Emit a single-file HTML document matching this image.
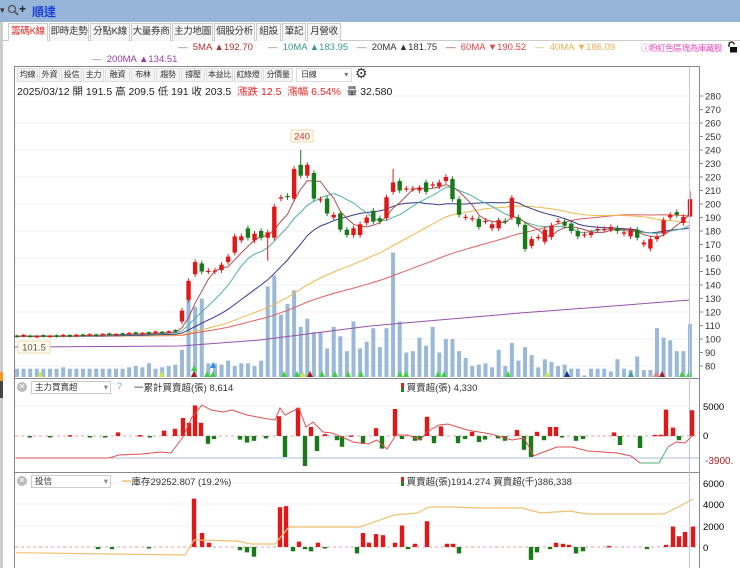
<!DOCTYPE html>
<html><head><meta charset="utf-8">
<style>
*{margin:0;padding:0;box-sizing:border-box}
body{width:740px;height:568px;overflow:hidden;background:#fff;font-family:"Liberation Sans","Noto Sans CJK TC",sans-serif;position:relative;color:#333}
.hdr{position:absolute;left:0;top:0;width:740px;height:22px;background:#97b4d9}
.abs{position:absolute;white-space:nowrap}
.tab{position:absolute;top:23px;height:18px;border:1px solid #ccc;border-bottom:none;background:#f6f6f6;font-size:9.5px;line-height:16px;text-align:center;color:#333;white-space:nowrap;overflow:hidden;letter-spacing:-0.3px}
.tb{position:absolute;top:68px;height:14px;border:1px solid #ddd;background:#f4f4f4;font-size:8px;line-height:12px;text-align:center;color:#333;white-space:nowrap;overflow:hidden;letter-spacing:-0.3px}
</style></head><body>
<div class="hdr"></div>
<div class="abs" style="left:0;top:5px;font-size:9px;color:#333">▾</div>
<svg class="abs" style="left:7px;top:4px" width="12" height="12"><circle cx="5" cy="5" r="3.5" fill="none" stroke="#555" stroke-width="1.3"/><line x1="7.5" y1="7.5" x2="11" y2="11" stroke="#555" stroke-width="1.6"/></svg>
<div class="abs" style="left:19px;top:2px;font-size:12px;font-weight:bold;color:#222">+</div>
<div class="abs" style="left:32px;top:3px;font-size:12px;font-weight:bold;color:#1a3fd8">順達</div>
<div class="abs" style="left:0;top:22px;width:740px;height:1px;background:#fff"></div>
<div class="abs" style="left:0;top:40px;width:740px;height:1px;background:#ccc"></div>
<div class="abs" style="left:0;top:22px;width:3px;height:546px;background:#ccc"></div>
<div class="abs" style="left:0;top:372px;width:3px;height:9px;background:#f39a1e"></div>
<div class="abs" style="left:0;top:381px;width:3px;height:17px;background:#444"></div>
<div class="tab" style="left:8px;width:40px;background:#fff;color:#d22">籌碼K線</div>
<div class="tab" style="left:49px;width:40px">即時走勢</div>
<div class="tab" style="left:90px;width:40px">分點K線</div>
<div class="tab" style="left:131px;width:40px">大量券商</div>
<div class="tab" style="left:172px;width:41px">主力地圖</div>
<div class="tab" style="left:214px;width:41px">個股分析</div>
<div class="tab" style="left:256px;width:25px">組設</div>
<div class="tab" style="left:282px;width:24px">筆記</div>
<div class="tab" style="left:307px;width:34px">月營收</div>
<div class="abs" style="top:42px;font-size:9.5px;left:178px;color:#a33"><span style="color:#777">—</span>&nbsp;&nbsp;5MA ▲192.70</div>
<div class="abs" style="top:42px;font-size:9.5px;left:268px;color:#3a9a92"><span style="color:#777">—</span>&nbsp;&nbsp;10MA ▲183.95</div>
<div class="abs" style="top:42px;font-size:9.5px;left:357px;color:#334"><span style="color:#777">—</span>&nbsp;&nbsp;20MA ▲181.75</div>
<div class="abs" style="top:42px;font-size:9.5px;left:446px;color:#d44"><span style="color:#a33">—</span>&nbsp;&nbsp;60MA ▼190.52</div>
<div class="abs" style="top:42px;font-size:9.5px;left:535px;color:#e8b050">—&nbsp;&nbsp;40MA ▼186.09</div>
<div class="abs" style="top:42px;font-size:8.5px;left:641px;color:#e050c0;letter-spacing:-0.4px">ⓘ粉紅色區塊為庫藏股</div>
<svg class="abs" style="left:726px;top:41px" width="12" height="12"><path d="M3 6V3.5a2.5 2.5 0 0 1 5 0" fill="none" stroke="#111" stroke-width="1.3"/><rect x="4" y="6" width="7" height="5.5" fill="#111"/></svg>
<div class="abs" style="top:54px;font-size:9.5px;left:92px;color:#9a3aa8"><span style="color:#777">—</span>&nbsp;&nbsp;200MA ▲134.51</div>
<div class="tb" style="left:17px;width:21px">均線</div>
<div class="tb" style="left:39px;width:21px">外資</div>
<div class="tb" style="left:61px;width:21px">投信</div>
<div class="tb" style="left:83px;width:21px">主力</div>
<div class="tb" style="left:105px;width:25px">融資</div>
<div class="tb" style="left:131px;width:24px">布林</div>
<div class="tb" style="left:156px;width:24px">趨勢</div>
<div class="tb" style="left:181px;width:24px">撐壓</div>
<div class="tb" style="left:206px;width:27px">本益比</div>
<div class="tb" style="left:234px;width:28px">紅綠燈</div>
<div class="tb" style="left:263px;width:30px">分價量</div>
<div class="tb" style="left:296px;width:56px;background:#fff;text-align:left;padding-left:4px">日線<span style="float:right;padding-right:3px;color:#777">▾</span></div>
<div class="abs" style="left:355px;top:65px;font-size:14px;color:#333">⚙</div>
<div class="abs" style="left:17px;top:84px;font-size:10.5px;color:#222">2025/03/12 開 191.5 高 209.5 低 191 收 203.5 &nbsp;<span style="color:#e22">漲跌 12.5 &nbsp;漲幅 6.54%</span>&nbsp; 量 32,580</div>
<svg id="c" class="abs" style="left:0;top:0" width="740" height="568"></svg>
<div class="abs" style="left:31px;top:381px;width:80px;height:13px;border:1px solid #ccc;font-size:8.5px;line-height:11px;padding-left:3px">主力買賣超<span style="float:right;color:#888;padding-right:2px">▾</span></div>
<div class="abs" style="left:17px;top:382px;width:10px;height:10px;border-radius:5px;background:#bbb;color:#fff;font-size:8px;line-height:10px;text-align:center">✕</div>
<div class="abs" style="left:117px;top:381px;font-size:9px;color:#6ab">?</div>
<div class="abs" style="left:134px;top:380px;font-size:9.5px">一累計買賣超(張) 8,614</div>
<div class="abs" style="left:401px;top:380px;font-size:9.5px"><span style="display:inline-block;width:3px;height:9px;background:linear-gradient(#d22 50%,#2a7a2a 50%);vertical-align:-1px"></span>&nbsp;買賣超(張) 4,330</div>
<div class="abs" style="left:31px;top:475px;width:80px;height:13px;border:1px solid #ccc;font-size:8.5px;line-height:11px;padding-left:3px">投信<span style="float:right;color:#888;padding-right:2px">▾</span></div>
<div class="abs" style="left:17px;top:476px;width:10px;height:10px;border-radius:5px;background:#bbb;color:#fff;font-size:8px;line-height:10px;text-align:center">✕</div>
<div class="abs" style="left:122px;top:474px;font-size:9.5px"><span style="color:#e8b050">━</span>庫存29252.807 (19.2%)</div>
<div class="abs" style="left:401px;top:474px;font-size:9.5px"><span style="display:inline-block;width:3px;height:9px;background:linear-gradient(#d22 50%,#2a7a2a 50%);vertical-align:-1px"></span>&nbsp;買賣超(張)1914.274 買賣超(千)386,338</div>
<script>
var S=document.getElementById('c'),h='';
function Y(p){return 366-(p-80)*1.35}
h+='<rect x="14.5" y="66.5" width="685" height="312" fill="none" stroke="#888"/>';
h+='<rect x="14.5" y="378.5" width="685" height="94" fill="none" stroke="#888"/>';
h+='<rect x="14.5" y="472.5" width="685" height="100" fill="none" stroke="#888"/>';
for(var p=80;p<=280;p+=10){var y=Y(p);if(p%20==0)h+='<line x1="15" x2="699" y1="'+y+'" y2="'+y+'" stroke="#f0f0f0"/>';h+='<line x1="700" x2="703" y1="'+y+'" y2="'+y+'" stroke="#888"/><text x="705" y="'+(y+3.5)+'" font-size="9.5" fill="#333">'+p+'</text>'}
var C=[];
var base=[102,102.5,102,101.8,102.3,102,102.2,102.5,102.4,102.6,102.8,103,102.8,103.2,103.5,103.2,103.6,104,104.3,104,104.5,105,104.8,105.2,106];
for(var i=0;i<25;i++){var b=base[i];C.push([b-0.6*(i%2?1:-1),b+0.6*(i%2?1:-1),b+1.2,b-1.2])}
var D=[[113,121],[129,143],[148,157],[156,150],[150,150.5],[150,150.8],[151,155],[157,161],[164,176],[173,176],[182,175],[173,178],[180,175],[175,179],[175,198],[204,205],[206,205],[204,226],[229,221],[221,229],[223,204],[203,203.5],[204,193],[190,192],[193,181],[181,177],[177,182],[177,185],[186,190],[195,187],[189.5,187],[189.6,205],[209,216],[217,210],[211,211.5],[211,211.5],[210,212],[216,209],[214,214.5],[213,216],[217,220],[218.5,203.6],[203.6,192],[190,190.5],[189,189.5],[189,183],[187,187.5],[182,185],[182,188],[187.5,187],[190,204.6],[190,185],[184.5,166.7],[169,174],[175,175.5],[172,181],[175.5,184],[187,187.5],[187,184],[185.5,180],[180,176],[177,177.5],[177,179],[181,181.5],[181,181.5],[181,183],[182,180],[178,179],[176,181],[181,175],[170,171.5],[167,174],[174,176],[178,188],[190,192],[194,192],[186,190.5],[190.6,203.6]];
var HL={13:[0,158],18:[240,0],32:[226,0],71:[0,165]};HL[D.length-1]=[209.5,191];
D.forEach(function(d,k){var o=d[0],c=d[1],hi=Math.max(o,c)+2,lo=Math.min(o,c)-2;var m=HL[k];if(m){if(m[0])hi=m[0];if(m[1])lo=m[1]}C.push([o,c,hi,lo])});
var N=C.length,sp=(690-17)/(N-1);function X(i){return 17+sp*i}
var V=[78,78,78,78,78,78,78,79,78,78,78,78,78,78,78,78,78,79,80,79,82,78,79,80,81,92,134,124,130,82,82,81,84,80,82,82,80,84,139,147,118,126,136,109,115,105,105,93,109,102,91,113,93,98,108,94,108,164,113,90,91,101,95,109,90,100,100,91,86,80,81,82,79,92,80,97,84,94,88,79,85,83,80,81,78,78,73,78,78,78,76,85,78,77,87,77,77,108,101,99,91,91,111];
for(var i=0;i<N;i++){var x=X(i),v=V[i]||80;h+='<rect x="'+(x-2)+'" y="'+Y(v)+'" width="4" height="'+(377-Y(v))+'" fill="#9ab8d8"/>'}
function ma(n,col){var pts=[];for(var i=0;i<N;i++){var s=0;for(var j=i-n+1;j<=i;j++){s+=(j<0?102:C[j][1])}pts.push(X(i).toFixed(1)+','+Y(s/n).toFixed(1))}h+='<polyline points="'+pts.join(' ')+'" fill="none" stroke="'+col+'" stroke-width="1"/>'}
h+='<polyline points="15,347 180,346 260,340 370,326 520,313 600,307 690,300" fill="none" stroke="#9a50b0" stroke-width="1"/>';
ma(60,'#e06060');ma(40,'#f0b850');ma(20,'#3a3a90');ma(10,'#50b0a8');ma(5,'#b05050');
for(var i=0;i<N;i++){var c=C[i],x=X(i),up=c[1]>=c[0],col=up?'#e01818':'#1a7a1a';var t=Y(Math.max(c[0],c[1])),b=Y(Math.min(c[0],c[1]));if(b-t<1.2)b=t+1.2;h+='<line x1="'+x+'" x2="'+x+'" y1="'+Y(c[2])+'" y2="'+Y(c[3])+'" stroke="'+col+'"/><rect x="'+(x-2.2)+'" y="'+t+'" width="4.4" height="'+(b-t)+'" fill="'+col+'"/>'}
h+='<rect x="291" y="130" width="22" height="12" fill="#fffbe8" stroke="#e8dcb0"/><text x="302" y="139.5" font-size="9.5" fill="#c33" text-anchor="middle">240</text>';
h+='<rect x="18" y="341" width="32" height="12" fill="#fffbe8" stroke="#e8dcb0"/><text x="34" y="350.5" font-size="9.5" fill="#555" text-anchor="middle">101.5</text>';
[[40,'#c8e850'],[162,'#c8e850'],[194,'#40d040'],[194,'#a02020'],[207,'#40d040'],[213,'#f0a030'],[213,'#40d040'],[284,'#40d040'],[297,'#40d040'],[303,'#c8e850'],[310,'#a02020'],[322,'#40d040'],[335,'#40d040'],[348,'#40d040'],[361,'#40d040'],[400,'#40d040'],[406,'#40d040'],[438,'#40d040'],[444,'#40d040'],[508,'#40d040'],[547,'#c8e850'],[567,'#203090'],[631,'#40a0a0'],[656,'#e08080'],[662,'#a02020'],[682,'#40d040'],[689,'#40d040']].forEach(function(t){h+='<polygon points="'+(t[0]-3)+',377 '+(t[0]+3)+',377 '+t[0]+',371" fill="'+t[1]+'"/>'});
h+='<polygon points="210,368 216,368 213,362" fill="#3090e0"/><polygon points="191,371 197,371 194,365" fill="#40d040"/>';
h+='<line x1="689.5" x2="689.5" y1="67" y2="568" stroke="#b8cce8"/>';
function Y2(v){return 436-v*0.006}
h+='<line x1="15" x2="699" y1="406" y2="406" stroke="#f2f2f2"/><line x1="15" x2="699" y1="458" y2="458" stroke="#aab8e0"/><line x1="15" x2="699" y1="436" y2="436" stroke="#e0a0a0" stroke-dasharray="3,3"/>';
h+='<text x="703" y="410" font-size="9.5">5000</text><text x="703" y="439" font-size="9.5">0</text><text x="705" y="464" font-size="10" fill="#a22">-3900.</text>';
var B2=[[118,600],[164,900],[175,1200],[183,3000],[189,2200],[195,5100],[201,2200],[279,3300],[298,4700],[311,1500],[325,300],[351,100],[376,1300],[395,4500],[427,3200],[441,1600],[472,700],[517,1000],[537,700],[550,1500],[556,1500],[614,600],[655,200],[661,200],[666,4400],[673,1400],[692,4300],[208,-1300],[214,-500],[240,-600],[247,-1100],[254,-800],[266,-400],[285,-3500],[305,-5000],[317,-2500],[337,-700],[342,-1800],[363,-1300],[382,-2100],[402,-500],[415,-800],[420,-700],[434,-1200],[458,-1200],[465,-500],[479,-1000],[485,-600],[498,-400],[505,-800],[524,-2300],[531,-3500],[544,-700],[562,-200],[576,-800],[583,-500],[620,-1500],[640,-2000],[679,-700],[30,-150],[50,-150],[70,150],[90,-150],[105,-150],[140,150],[150,-150]];
B2.forEach(function(b){var v=b[1],y=Y2(Math.max(v,0)),hh=Math.abs(v)*0.006;h+='<rect x="'+(b[0]-2.2)+'" y="'+y+'" width="4.4" height="'+Math.max(hh,1.5)+'" fill="'+(v>0?'#e01818':'#1a7a1a')+'"/>'});
h+='<polyline points="16,458 109,458 119,455 142,454 161,452 171,453 183,437 192,417 202,405 211,410 223,412 232,410 247,415 268,419 275,420 280,408 285,415 299,408 306,427 313,422 323,432 332,433 342,437 353,442 368,444 377,440 387,449 396,435 408,435 420,440 427,432 439,425 448,424 467,430 491,434 512,440 524,438 534,456 541,453 557,447 572,447 588,451 617,453 631,456 640,463" fill="none" stroke="#e05050"/>';
h+='<polyline points="640,463 659,463 668,447" fill="none" stroke="#50b070"/><polyline points="668,447 676,442 685,443 693,435" fill="none" stroke="#e05050"/>';
function Y3(v){return 547-v*0.01075}
[483,504,526].forEach(function(y){h+='<line x1="15" x2="699" y1="'+y+'" y2="'+y+'" stroke="#f2f2f2"/>'});
h+='<line x1="15" x2="699" y1="547" y2="547" stroke="#e0a0a0" stroke-dasharray="3,3"/>';
h+='<text x="703" y="487" font-size="9.5">6000</text><text x="703" y="508" font-size="9.5">4000</text><text x="703" y="530" font-size="9.5">2000</text><text x="703" y="551" font-size="9.5">0</text>';
var B3=[[194,4500],[202,1300],[209,400],[280,3700],[286,3800],[299,500],[318,400],[363,1300],[369,400],[376,1200],[383,1100],[395,400],[402,2000],[415,300],[427,2400],[447,300],[453,300],[556,400],[563,300],[569,200],[609,100],[666,200],[673,1900],[679,1000],[685,1400],[693,1900],[98,-200],[112,-200],[149,-100],[240,-300],[247,-500],[254,-900],[293,-400],[305,-200],[311,-400],[325,-100],[357,-600],[408,-200],[459,-600],[531,-1200],[537,-500],[550,-200],[576,-600],[583,-400],[647,-200]];
B3.forEach(function(b){var v=b[1],y=Y3(Math.max(v,0)),hh=Math.abs(v)*0.01075;h+='<rect x="'+(b[0]-2.2)+'" y="'+y+'" width="4.4" height="'+Math.max(hh,1.5)+'" fill="'+(v>0?'#e01818':'#1a7a1a')+'"/>'});
h+='<polyline points="16,552.7 185,555 194,540 237,541 251,544 275,544 289,527 323,527 360,527 394,515 417,513 429,507 451,507 479,508 522,508 541,513 569,511 588,514 664,514 678,507 693,499" fill="none" stroke="#f0c070" stroke-width="1.2"/>';
S.innerHTML=h;
</script>
</body></html>
